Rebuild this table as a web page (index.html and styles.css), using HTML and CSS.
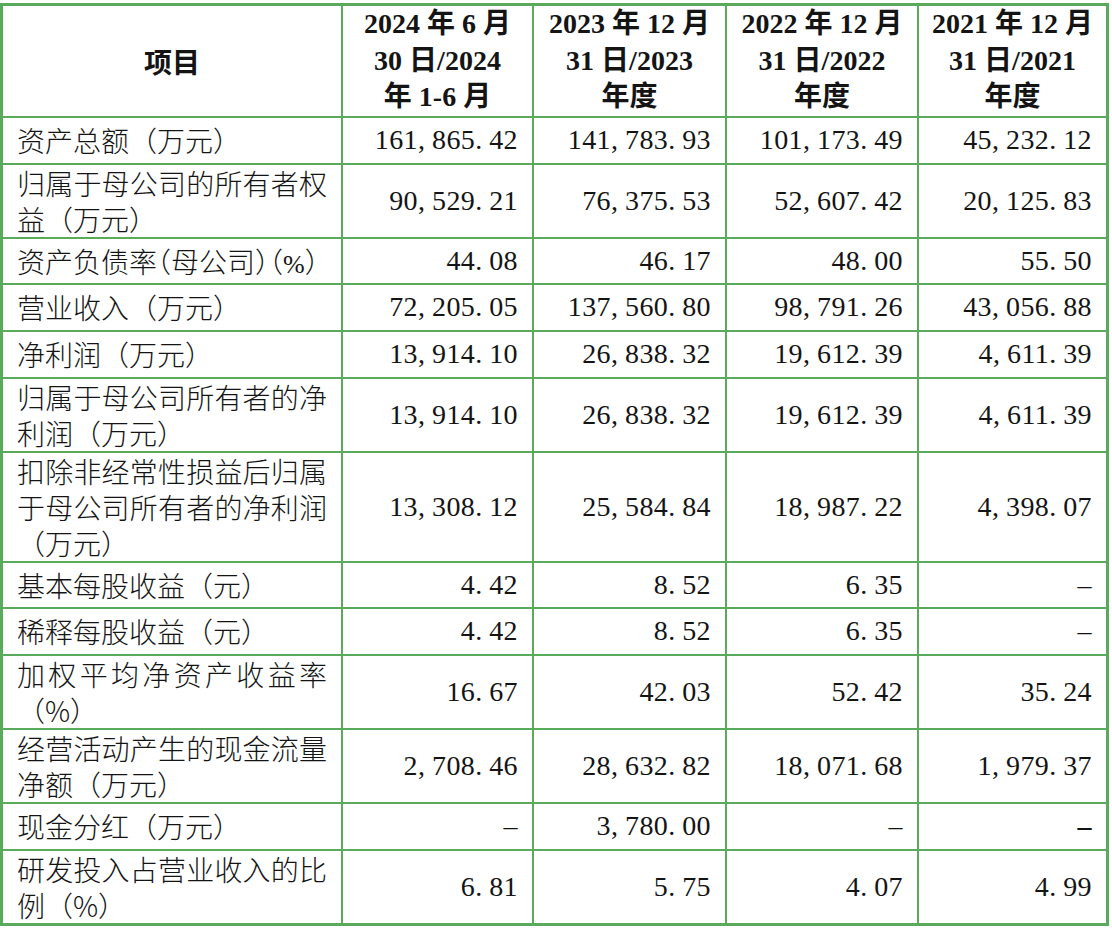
FILE: index.html
```html
<!DOCTYPE html>
<html lang="zh-CN">
<head>
<meta charset="utf-8">
<title>主要财务数据</title>
<link rel="stylesheet" href="styles.css">
</head>
<body>
<table class="fin">
  <colgroup>
    <col class="c-item">
    <col class="c-a">
    <col class="c-b">
    <col class="c-c">
    <col class="c-d">
  </colgroup>
  <thead>
    <tr>
      <th>项目</th>
      <th>2024 年 6 月<br>30 日/2024<br>年 1-6 月</th>
      <th>2023 年 12 月<br>31 日/2023<br>年度</th>
      <th>2022 年 12 月<br>31 日/2022<br>年度</th>
      <th>2021 年 12 月<br>31 日/2021<br>年度</th>
    </tr>
  </thead>
  <tbody>
    <tr>
      <td class="lbl">资产总额（万元）</td>
      <td class="num">161<span class="p">,</span>865<span class="p">.</span>42</td>
      <td class="num">141<span class="p">,</span>783<span class="p">.</span>93</td>
      <td class="num">101<span class="p">,</span>173<span class="p">.</span>49</td>
      <td class="num">45<span class="p">,</span>232<span class="p">.</span>12</td>
    </tr>
    <tr>
      <td class="lbl">归属于母公司的所有者权益（万元）</td>
      <td class="num">90<span class="p">,</span>529<span class="p">.</span>21</td>
      <td class="num">76<span class="p">,</span>375<span class="p">.</span>53</td>
      <td class="num">52<span class="p">,</span>607<span class="p">.</span>42</td>
      <td class="num">20<span class="p">,</span>125<span class="p">.</span>83</td>
    </tr>
    <tr class="short">
      <td class="lbl nw">资产负债率<span class="h">（</span>母公司<span class="h">）（</span><span class="pct">%</span>）</td>
      <td class="num">44<span class="p">.</span>08</td>
      <td class="num">46<span class="p">.</span>17</td>
      <td class="num">48<span class="p">.</span>00</td>
      <td class="num">55<span class="p">.</span>50</td>
    </tr>
    <tr>
      <td class="lbl">营业收入（万元）</td>
      <td class="num">72<span class="p">,</span>205<span class="p">.</span>05</td>
      <td class="num">137<span class="p">,</span>560<span class="p">.</span>80</td>
      <td class="num">98<span class="p">,</span>791<span class="p">.</span>26</td>
      <td class="num">43<span class="p">,</span>056<span class="p">.</span>88</td>
    </tr>
    <tr>
      <td class="lbl">净利润（万元）</td>
      <td class="num">13<span class="p">,</span>914<span class="p">.</span>10</td>
      <td class="num">26<span class="p">,</span>838<span class="p">.</span>32</td>
      <td class="num">19<span class="p">,</span>612<span class="p">.</span>39</td>
      <td class="num">4<span class="p">,</span>611<span class="p">.</span>39</td>
    </tr>
    <tr>
      <td class="lbl">归属于母公司所有者的净利润（万元）</td>
      <td class="num">13<span class="p">,</span>914<span class="p">.</span>10</td>
      <td class="num">26<span class="p">,</span>838<span class="p">.</span>32</td>
      <td class="num">19<span class="p">,</span>612<span class="p">.</span>39</td>
      <td class="num">4<span class="p">,</span>611<span class="p">.</span>39</td>
    </tr>
    <tr>
      <td class="lbl">扣除非经常性损益后归属于母公司所有者的净利润（万元）</td>
      <td class="num">13<span class="p">,</span>308<span class="p">.</span>12</td>
      <td class="num">25<span class="p">,</span>584<span class="p">.</span>84</td>
      <td class="num">18<span class="p">,</span>987<span class="p">.</span>22</td>
      <td class="num">4<span class="p">,</span>398<span class="p">.</span>07</td>
    </tr>
    <tr class="short">
      <td class="lbl">基本每股收益（元）</td>
      <td class="num">4<span class="p">.</span>42</td>
      <td class="num">8<span class="p">.</span>52</td>
      <td class="num">6<span class="p">.</span>35</td>
      <td class="num">–</td>
    </tr>
    <tr>
      <td class="lbl">稀释每股收益（元）</td>
      <td class="num">4<span class="p">.</span>42</td>
      <td class="num">8<span class="p">.</span>52</td>
      <td class="num">6<span class="p">.</span>35</td>
      <td class="num">–</td>
    </tr>
    <tr>
      <td class="lbl">加权平均净资产收益率（%）</td>
      <td class="num">16<span class="p">.</span>67</td>
      <td class="num">42<span class="p">.</span>03</td>
      <td class="num">52<span class="p">.</span>42</td>
      <td class="num">35<span class="p">.</span>24</td>
    </tr>
    <tr>
      <td class="lbl">经营活动产生的现金流量净额（万元）</td>
      <td class="num">2<span class="p">,</span>708<span class="p">.</span>46</td>
      <td class="num">28<span class="p">,</span>632<span class="p">.</span>82</td>
      <td class="num">18<span class="p">,</span>071<span class="p">.</span>68</td>
      <td class="num">1<span class="p">,</span>979<span class="p">.</span>37</td>
    </tr>
    <tr>
      <td class="lbl">现金分红（万元）</td>
      <td class="num">–</td>
      <td class="num">3<span class="p">,</span>780<span class="p">.</span>00</td>
      <td class="num">–</td>
      <td class="num strong">–</td>
    </tr>
    <tr class="last">
      <td class="lbl">研发投入占营业收入的比例（%）</td>
      <td class="num">6<span class="p">.</span>81</td>
      <td class="num">5<span class="p">.</span>75</td>
      <td class="num">4<span class="p">.</span>07</td>
      <td class="num">4<span class="p">.</span>99</td>
    </tr>
  </tbody>
</table>
</body>
</html>
```
FILE: styles.css
```css
* {
  box-sizing: border-box;
}

html,
body {
  margin: 0;
  background: #ffffff;
}

body {
  padding-top: 3px;
  color: #141414;
  font-family: "Noto Sans CJK SC", sans-serif;
}

.fin {
  width: 1109px;
  table-layout: fixed;
  border-collapse: separate;
  border-spacing: 0;
  border-top: 3px solid #5aaa5c;
  border-left: 3px solid #5aaa5c;
}

.c-item { width: 340px; }
.c-a { width: 191px; }
.c-b { width: 193px; }
.c-c { width: 192px; }
.c-d { width: 190px; }

.fin th,
.fin td {
  border-right: 2px solid #5aaa5c;
  border-bottom: 2px solid #5aaa5c;
  vertical-align: middle;
  font-size: 28px;
}

.fin th:last-child,
.fin td:last-child {
  border-right-width: 3px;
}

.fin th {
  height: 111px;
  padding: 0 4px;
  line-height: 36.5px;
  font-weight: 700;
  text-align: center;
  font-family: "Liberation Serif", "Noto Sans CJK SC", serif;
}

.fin th:first-child {
  font-family: "Noto Sans CJK SC", sans-serif;
}

.fin td {
  height: 47px;
  padding: 0 14px;
  line-height: 36px;
}

.fin tr.short td {
  height: 46px;
}

.fin tr.last td {
  height: 75px;
  border-bottom-width: 3px;
}

.lbl {
  text-align: justify;
  font-weight: 300;
}

.nw {
  white-space: nowrap;
  text-align: left;
}

.h {
  font-feature-settings: "halt";
}

.pct {
  font-family: "Liberation Serif", serif;
  font-size: 26px;
  line-height: 1;
}

.num {
  text-align: right;
  font-family: "Liberation Serif", serif;
  font-size: 26px;
  letter-spacing: 0.4px;
}

.num .p {
  display: inline-block;
  width: 14px;
  line-height: 1;
  text-align: left;
}

.num.strong {
  font-weight: 700;
}
```
